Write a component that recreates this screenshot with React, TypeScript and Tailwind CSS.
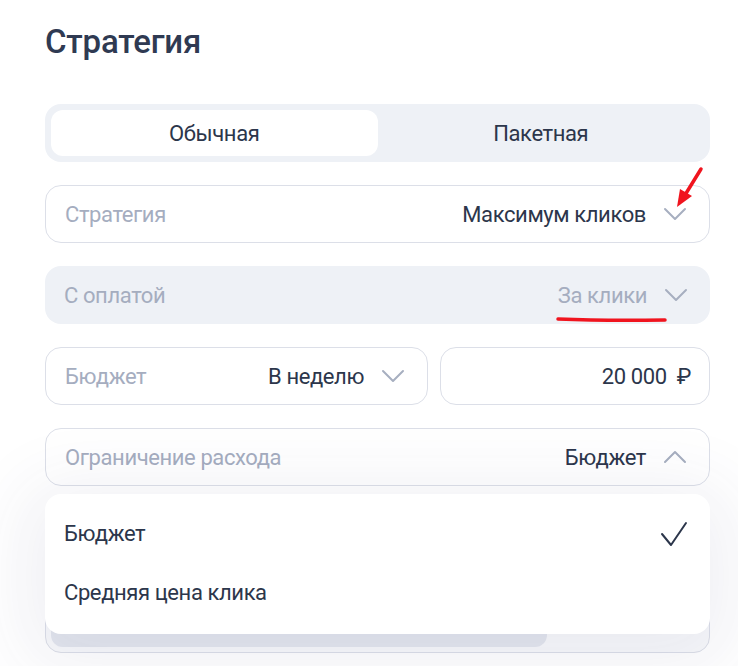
import React from "react";

const font = { fontFamily: "Roboto, 'Noto Sans', sans-serif" };

function Chevron({ up = false, color = "#a7afc0" }: { up?: boolean; color?: string }) {
  return (
    <svg width="24" height="14" viewBox="0 0 24 14" fill="none" className="shrink-0">
      <polyline
        points={up ? "2,12 12,2 22,12" : "2,2 12,12 22,2"}
        stroke={color}
        strokeWidth="2"
        strokeLinecap="round"
        strokeLinejoin="round"
      />
    </svg>
  );
}

function SelectField({
  label,
  value,
  disabled = false,
  up = false,
  className = "",
}: {
  label: string;
  value: string;
  disabled?: boolean;
  up?: boolean;
  className?: string;
}) {
  return (
    <div
      className={
        "flex h-[58px] items-center justify-between rounded-[16px] pl-[19px] pr-[22px] " +
        (disabled ? "bg-[#eef1f6]" : "border border-[#dcdfe8] bg-white") +
        " " +
        className
      }
    >
      <span className="text-[22px] tracking-[-0.4px] text-[#a5adbf]">{label}</span>
      <span className="flex items-center gap-[17px]">
        <span className={"text-[22px] tracking-[-0.4px] " + (disabled ? "text-[#a5adbf]" : "text-[#2c364b]")}>
          {value}
        </span>
        <Chevron up={up} />
      </span>
    </div>
  );
}

export default function App() {
  return (
    <div className="relative h-[666px] w-[738px] overflow-hidden bg-white" style={font}>
      <div className="pl-[45px] pr-[28px] pt-[22px]">
        <h1 className="text-[33px] font-medium leading-[40px] tracking-[-0.2px] text-[#2f3a52]">Стратегия</h1>

        <div className="mt-[42px] grid h-[58px] grid-cols-2 rounded-[16px] bg-[#eef1f6] p-[6px] text-[22px] tracking-[-0.4px] text-[#2c364b]">
          <div className="flex items-center justify-center rounded-[12px] bg-white">Обычная</div>
          <div className="flex items-center justify-center">Пакетная</div>
        </div>

        <div className="mt-[23px] flex flex-col gap-[23px]">
          <SelectField label="Стратегия" value="Максимум кликов" />
          <SelectField label="С оплатой" value="За клики" disabled />

          <div className="grid grid-cols-[383px_1fr] gap-[12px]">
            <SelectField label="Бюджет" value="В неделю" />
            <div className="flex h-[58px] items-center justify-end rounded-[16px] border border-[#dcdfe8] bg-white pr-[18px] text-[22px] tracking-[-0.4px] text-[#2c364b]">
              20 000&nbsp;&nbsp;₽
            </div>
          </div>

          <SelectField label="Ограничение расхода" value="Бюджет" up className="bg-[#fbfbfd]" />

          <div className="flex h-[144px] flex-col justify-end rounded-[16px] border border-[#dcdfe8] bg-[#f8f9fb] p-[5px]">
            <div className="h-[48px] w-[496px] rounded-[12px] bg-[#e3e6ee]" />
          </div>
        </div>
      </div>

      {/* открытое меню */}
      <div className="absolute left-[45px] top-[494px] w-[665px] rounded-[16px] bg-white pb-[12px] pt-[10px] text-[22px] tracking-[-0.4px] text-[#2c364b] shadow-[0_12px_70px_24px_rgba(50,60,110,0.07)]">
        <div className="flex h-[59px] items-center justify-between pl-[19px] pr-[22px]">
          Бюджет
          <svg width="28" height="26" viewBox="0 0 28 26" fill="none">
            <polyline points="2,13 11,24 26,2" stroke="#2c364b" strokeWidth="2" strokeLinecap="round" strokeLinejoin="round" />
          </svg>
        </div>
        <div className="flex h-[59px] items-center pl-[19px]">Средняя цена клика</div>
      </div>

      {/* пометки */}
      <svg className="absolute left-[668px] top-[165px]" width="40" height="48" viewBox="0 0 40 48" fill="none">
        <line x1="33" y1="4" x2="17" y2="30" stroke="#f0141e" strokeWidth="3.5" strokeLinecap="round" />
        <polygon points="9,42 12,24 24,31" fill="#f0141e" />
      </svg>
      <svg className="absolute left-[555px] top-[314px]" width="115" height="12" viewBox="0 0 115 12" fill="none">
        <path d="M3 5 Q50 7 110 6" stroke="#f0141e" strokeWidth="3.5" strokeLinecap="round" />
      </svg>
    </div>
  );
}
